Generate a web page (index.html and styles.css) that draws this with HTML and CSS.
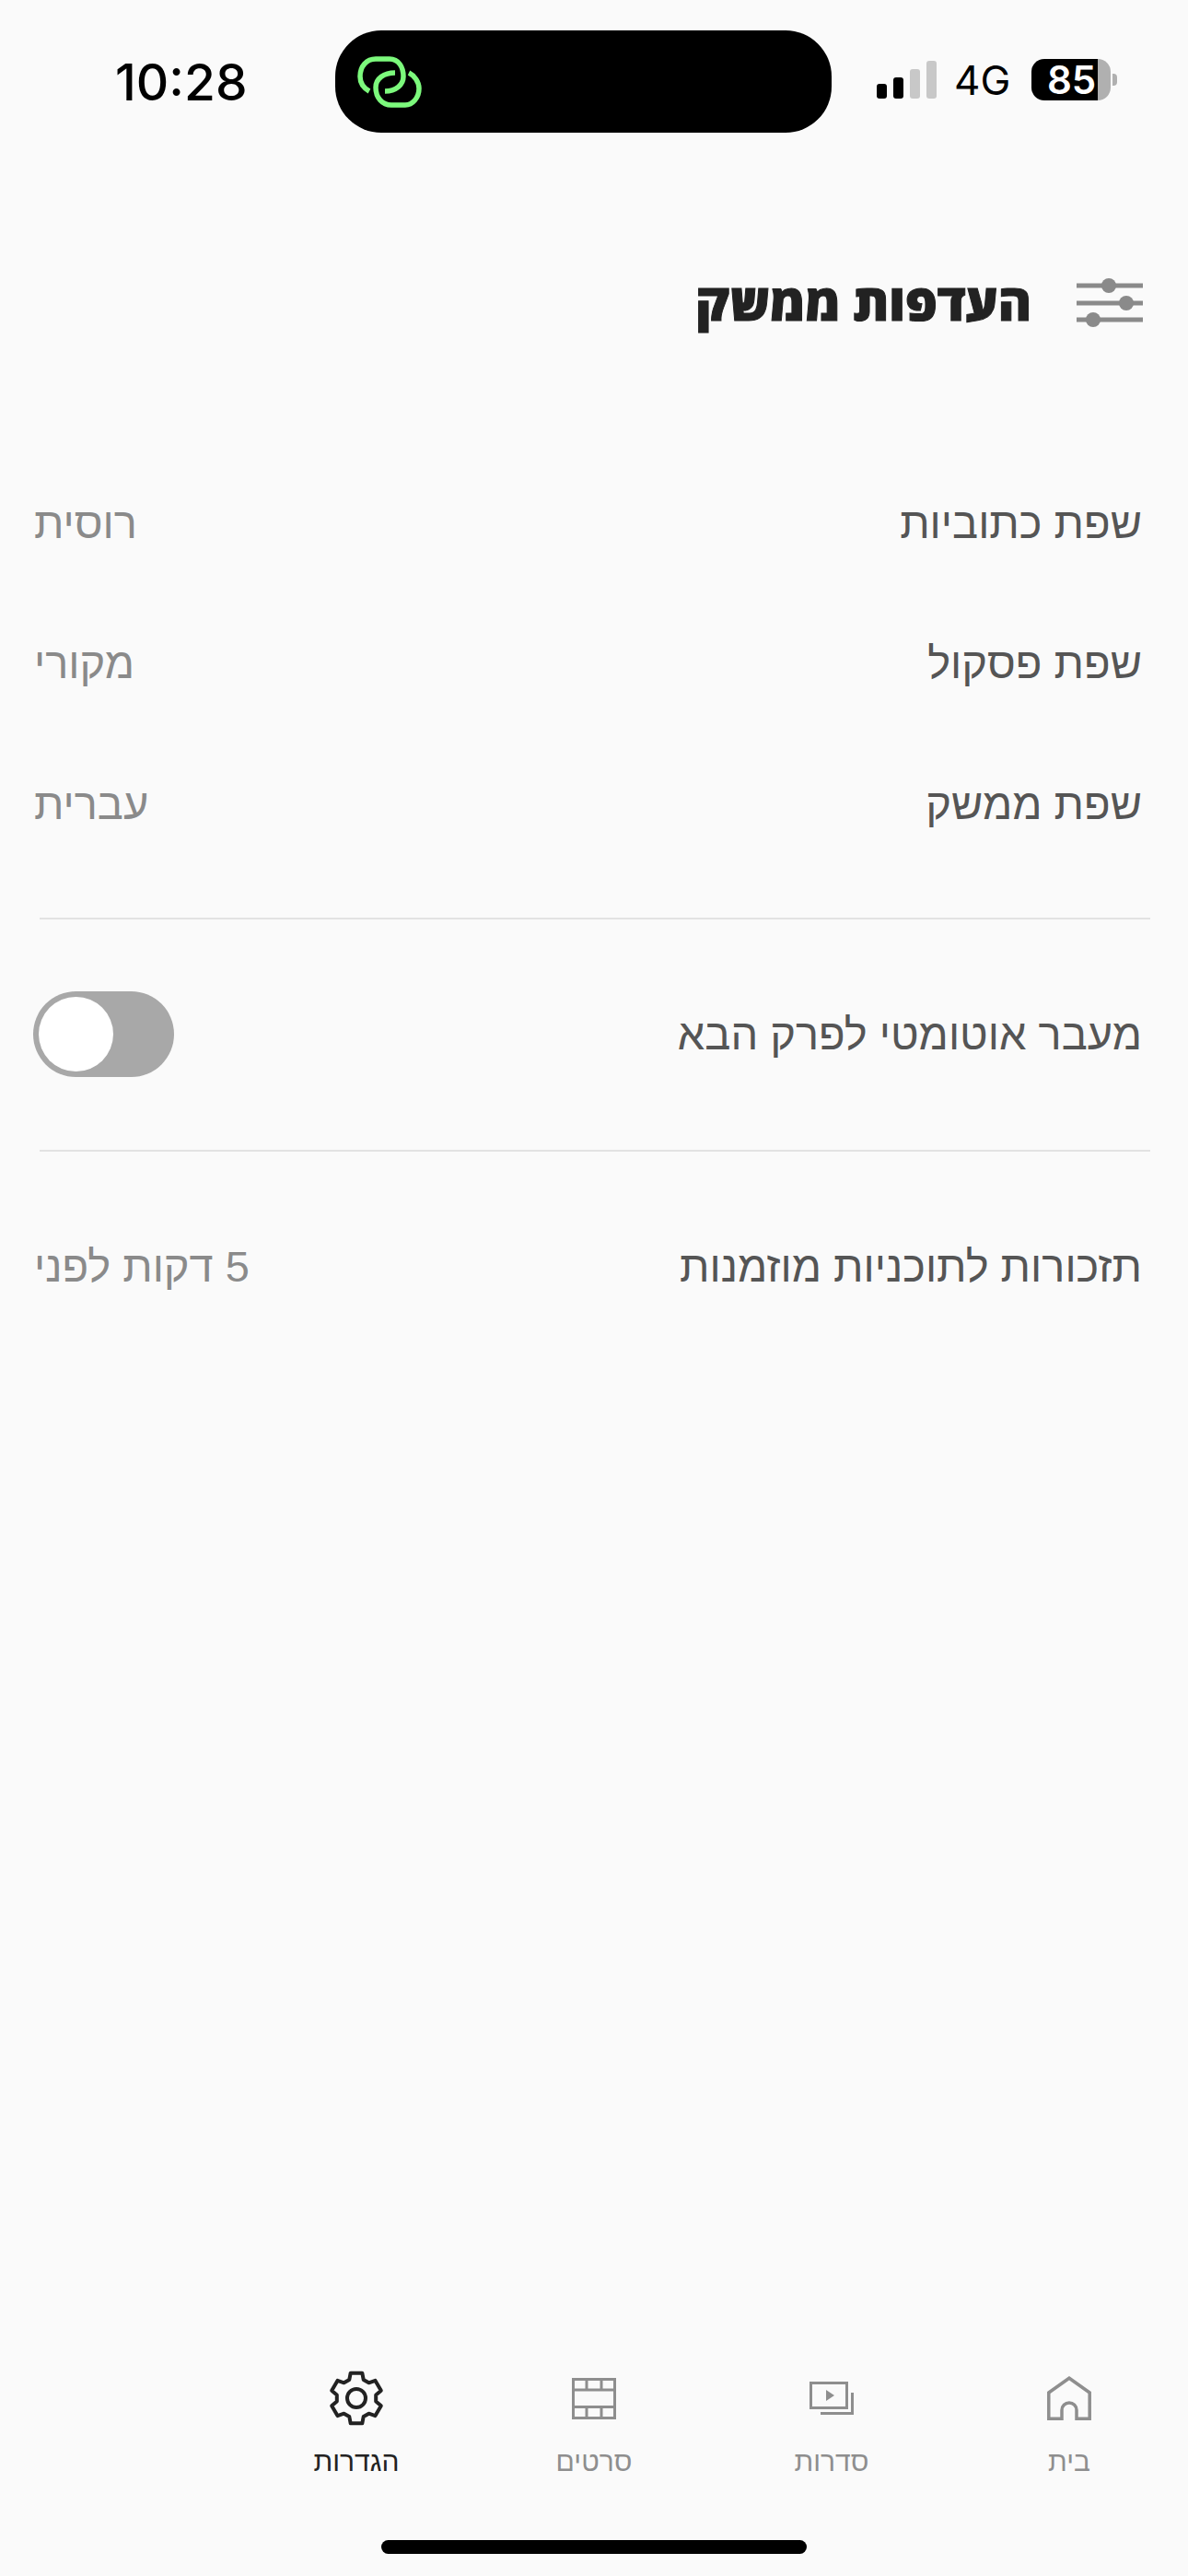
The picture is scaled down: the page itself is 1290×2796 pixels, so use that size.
FILE: index.html
```html
<!DOCTYPE html>
<html lang="he">
<head>
  <title>העדפות ממשק</title>
  <meta charset="utf-8" />
  <link rel="stylesheet" href="styles.css">
</head>
<body>
  <div class="page">

    <div class="status">
      <div class="time">10:28</div>
      <div class="island">
        <svg class="island-icon" viewBox="0 0 70 57" width="70" height="57" fill="none" stroke="#7cf97c" stroke-width="5.5">
          <path d="M13 39C6 35 3 29 3 23C3 12 10 4 20 4H35C45 4 50 13 50 23C50 32 42 39 30 39" />
          <path d="M41 19C29 19 20 25 20 35C20 46 27 54 37 54H52C60 54 67 46 67 36C67 29 62 22 56 19" />
        </svg>
      </div>
      <div class="status-icons">
        <div class="signal">
          <span class="bar bar-1"></span>
          <span class="bar bar-2"></span>
          <span class="bar bar-3 off"></span>
          <span class="bar bar-4 off"></span>
        </div>
        <div class="network">4G</div>
        <div class="battery">
          <div class="battery-fill">85</div>
          <div class="battery-rest"></div>
        </div>
        <div class="battery-nub"></div>
      </div>
    </div>

    <div class="header">
      <svg viewBox="0 0 74 56" width="74" height="56" fill="#8a8a8a" stroke="none">
        <rect x="0" y="6.5" width="72" height="5" />
        <rect x="0" y="25.5" width="72" height="5" />
        <rect x="0" y="43.5" width="72" height="5" />
        <circle cx="35" cy="9" r="8" />
        <circle cx="54" cy="28" r="8" />
        <circle cx="18" cy="46" r="8" />
      </svg>
      <h1>העדפות ממשק</h1>
    </div>

    <div class="section section-lang">
      <div class="row"><span class="label">שפת כתוביות</span><span class="value">רוסית</span></div>
      <div class="row"><span class="label">שפת פסקול</span><span class="value">מקורי</span></div>
      <div class="row"><span class="label">שפת ממשק</span><span class="value">עברית</span></div>
    </div>

    <div class="divider"></div>

    <div class="section section-toggle">
      <div class="row">
        <span class="label">מעבר אוטומטי לפרק הבא</span>
        <div class="toggle"><div class="thumb"></div></div>
      </div>
    </div>

    <div class="divider"></div>

    <div class="section section-remind">
      <div class="row"><span class="label">תזכורות לתוכניות מוזמנות</span><span class="value">5 דקות לפני</span></div>
    </div>

    <div class="tabs">
      <div class="tab">
        <div class="tab-icon">
          <svg viewBox="0 0 48 48" width="48" height="48" fill="none" stroke="#8e8e8e" stroke-width="3.5">
            <path d="M1.8 46.2V18L24 2.2L46.2 18V46.2H32V37A8 8 0 0 0 16 37V46.2Z" />
          </svg>
        </div>
        <div class="tab-label">בית</div>
      </div>
      <div class="tab">
        <div class="tab-icon">
          <svg viewBox="0 0 48 36" width="48" height="36" fill="none" stroke="#8e8e8e" stroke-width="3">
            <rect x="1.5" y="1.5" width="39" height="27" />
            <path d="M12 34.5H46.5V12" />
            <path d="M18 9V21L27 15Z" fill="#8e8e8e" stroke="none" />
          </svg>
        </div>
        <div class="tab-label">סדרות</div>
      </div>
      <div class="tab">
        <div class="tab-icon">
          <svg viewBox="0 0 48 45" width="48" height="45" fill="none" stroke="#8e8e8e" stroke-width="3">
            <rect x="1.5" y="1.5" width="45" height="42" />
            <path d="M1.5 13H46.5M1.5 31.5H46.5M16 1.5V13M32 1.5V13M16 31.5V43.5M32 31.5V43.5" />
          </svg>
        </div>
        <div class="tab-label">סרטים</div>
      </div>
      <div class="tab active">
        <div class="tab-icon">
          <svg viewBox="0 0 60 60" width="60" height="60" fill="none" stroke="#222" stroke-width="4" stroke-linejoin="round">
            <path d="M22.3 9.9L23.7 2.7H36.3L37.7 9.9L43.5 13.3L50.5 10.9L56.8 21.8L51.2 26.6V33.4L56.8 38.2L50.5 49.1L43.5 46.7L37.7 50.1L36.3 57.3H23.7L22.3 50.1L16.5 46.7L9.5 49.1L3.2 38.2L8.8 33.4V26.6L3.2 21.8L9.5 10.9L16.5 13.3Z" />
            <circle cx="30" cy="30" r="10" />
          </svg>
        </div>
        <div class="tab-label">הגדרות</div>
      </div>
    </div>

    <div class="home-bar"></div>
  </div>
</body>
</html>
```

FILE: styles.css
```css
body {
  margin: 0;
  padding: 0;
  background: #fafafa;
}

.page {
  display: flex;
  flex-direction: column;
  height: 2796px;
  direction: rtl;
  font-family: "Liberation Sans", "Open Sans", sans-serif;
  overflow: hidden;
}

/* status bar */
.status {
  display: flex;
  direction: ltr;
  align-items: center;
  height: 111px;
  margin-top: 33px;
  padding-left: 125px;
}

.time {
  width: 239px;
  font-family: Inter, sans-serif;
  font-size: 55px;
  font-weight: 500;
  color: #000;
}

.island {
  display: flex;
  align-items: center;
  width: 539px;
  height: 111px;
  padding-left: 24px;
  box-sizing: border-box;
  background: #000;
  border-radius: 50px;
}

.status-icons {
  display: flex;
  align-items: center;
  margin-left: 49px;
  margin-bottom: 4px;
}

.signal {
  display: flex;
  align-items: flex-end;
  gap: 7px;
}

.bar {
  width: 11px;
  background: #000;
  border-radius: 3px;
}

.bar-1 { height: 16px; }
.bar-2 { height: 23px; }
.bar-3 { height: 32px; }
.bar-4 { height: 41px; }

.bar.off {
  background: #c8c8c8;
}

.network {
  margin-left: 19px;
  font-family: Inter, sans-serif;
  font-size: 44px;
  color: #000;
}

.battery {
  display: flex;
  width: 86px;
  height: 45px;
  margin-left: 23px;
}

.battery-fill {
  width: 72px;
  padding-right: 2px;
  box-sizing: border-box;
  background: #000;
  border-radius: 14px 0 0 14px;
  color: #fff;
  font-family: Inter, sans-serif;
  font-size: 42px;
  font-weight: 600;
  line-height: 45px;
  text-align: right;
}

.battery-rest {
  flex: 1;
  background: #b0b0b0;
  border-radius: 0 14px 14px 0;
}

.battery-nub {
  width: 5px;
  height: 13px;
  margin-left: 2px;
  background: #b0b0b0;
  border-radius: 0 4px 4px 0;
}

/* header */
.header {
  display: flex;
  align-items: center;
  gap: 49px;
  margin-top: 157px;
  padding-right: 47px;
}

h1 {
  margin: 0 0 4px;
  font-family: "Open Sans", sans-serif;
  font-size: 55px;
  font-weight: 800;
  line-height: 52px;
  color: #222;
  -webkit-text-stroke: 1px #222;
}

/* settings list */
.section-lang {
  margin-top: 134px;
  padding-bottom: 47px;
}

.section-lang .row {
  height: 152.5px;
}

.section-toggle .row {
  height: 250px;
}

.section-remind .row {
  height: 250px;
}

.row {
  display: flex;
  align-items: center;
  justify-content: space-between;
  padding: 0 50px 0 37px;
}

.label {
  font-size: 47px;
  color: #555;
}

.value {
  font-size: 47px;
  color: #8a8a8a;
}

.divider {
  height: 2px;
  margin: 0 41px 0 43px;
  background: #e2e2e2;
}

.toggle {
  display: flex;
  direction: ltr;
  width: 153px;
  height: 93px;
  padding: 6px;
  margin-left: -1px;
  box-sizing: border-box;
  background: #a8a8a8;
  border-radius: 47px;
}

.thumb {
  width: 81px;
  height: 81px;
  background: #fff;
  border-radius: 50%;
}

/* bottom tabs */
.tabs {
  display: grid;
  grid-template-columns: repeat(5, 1fr);
  margin-top: auto;
}

.tab {
  display: flex;
  flex-direction: column;
  align-items: center;
  gap: 21px;
}

.tab-icon {
  display: flex;
  align-items: center;
  justify-content: center;
  height: 60px;
}

.tab-label {
  font-size: 30px;
  line-height: 36px;
  color: #8e8e8e;
}

.active .tab-label {
  color: #222;
}

.home-bar {
  align-self: center;
  width: 462px;
  height: 15px;
  margin-top: 67px;
  margin-bottom: 24px;
  background: #000;
  border-radius: 8px;
}
```
